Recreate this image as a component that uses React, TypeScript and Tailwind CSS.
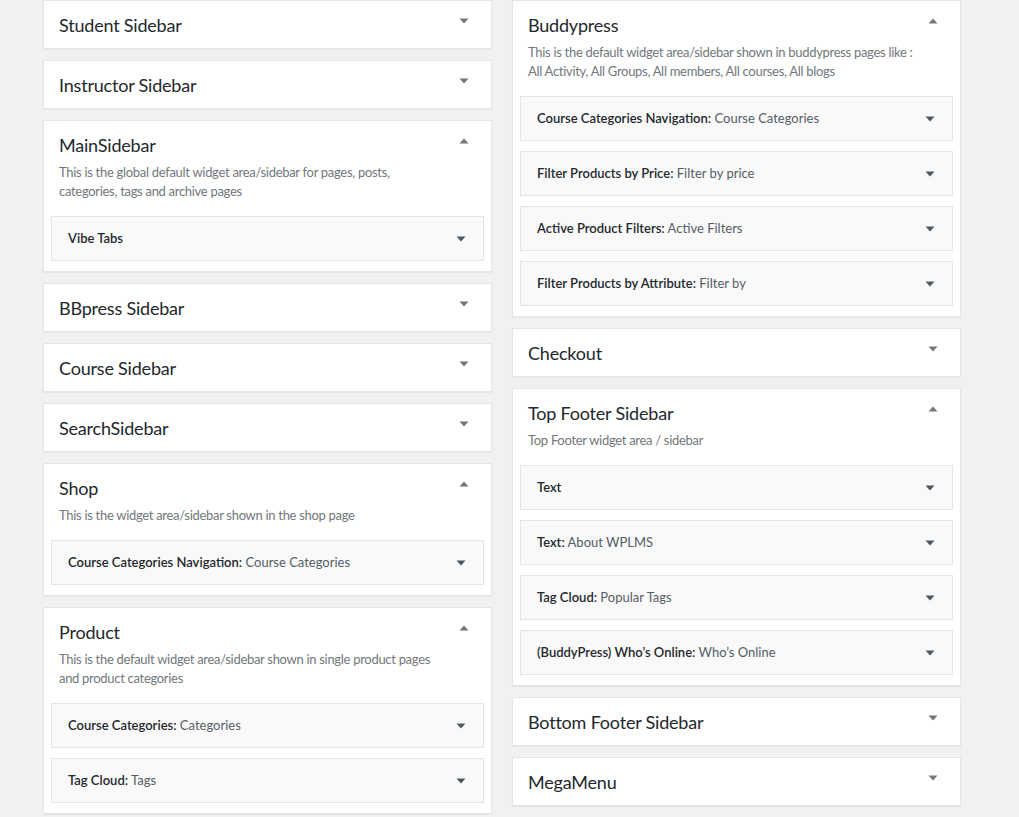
import React from 'react';

type Widget = { name: string; title?: string };
type Area = { name: string; desc?: string[]; widgets?: Widget[]; open?: boolean };

const left: Area[] = [
  { name: 'Student Sidebar' },
  { name: 'Instructor Sidebar' },
  {
    name: 'MainSidebar',
    open: true,
    desc: ['This is the global default widget area/sidebar for pages, posts,', 'categories, tags and archive pages'],
    widgets: [{ name: 'Vibe Tabs' }],
  },
  { name: 'BBpress Sidebar' },
  { name: 'Course Sidebar' },
  { name: 'SearchSidebar' },
  {
    name: 'Shop',
    open: true,
    desc: ['This is the widget area/sidebar shown in the shop page'],
    widgets: [{ name: 'Course Categories Navigation', title: 'Course Categories' }],
  },
  {
    name: 'Product',
    open: true,
    desc: ['This is the default widget area/sidebar shown in single product pages', 'and product categories'],
    widgets: [
      { name: 'Course Categories', title: 'Categories' },
      { name: 'Tag Cloud', title: 'Tags' },
    ],
  },
];

const right: Area[] = [
  {
    name: 'Buddypress',
    open: true,
    desc: ['This is the default widget area/sidebar shown in buddypress pages like :', 'All Activity, All Groups, All members, All courses, All blogs'],
    widgets: [
      { name: 'Course Categories Navigation', title: 'Course Categories' },
      { name: 'Filter Products by Price', title: 'Filter by price' },
      { name: 'Active Product Filters', title: 'Active Filters' },
      { name: 'Filter Products by Attribute', title: 'Filter by' },
    ],
  },
  { name: 'Checkout' },
  {
    name: 'Top Footer Sidebar',
    open: true,
    desc: ['Top Footer widget area / sidebar'],
    widgets: [
      { name: 'Text' },
      { name: 'Text', title: 'About WPLMS' },
      { name: 'Tag Cloud', title: 'Popular Tags' },
      { name: '(BuddyPress) Who\u2019s Online', title: 'Who\u2019s Online' },
    ],
  },
  { name: 'Bottom Footer Sidebar' },
  { name: 'MegaMenu' },
];

const Arrow = ({ up, color }: { up?: boolean; color: string }) => (
  <svg width="10" height="6" viewBox="0 0 10 6" className="shrink-0">
    {up ? <path d="M5 0.5 L9.5 5.5 L0.5 5.5 Z" fill={color} /> : <path d="M0.5 0.5 L9.5 0.5 L5 5.5 Z" fill={color} />}
  </svg>
);

const WidgetRow = ({ w }: { w: Widget }) => (
  <div className="mx-[7px] mb-[10px] last:mb-0 border border-[#e5e5e5] bg-[#f9f9f9] h-[45px] flex items-center justify-between pl-[16px] pr-[17px]">
    <p className="text-[13px] leading-[19px] text-[#23282d]">
      <span className="font-semibold">{w.name}{w.title ? ':' : ''}</span>
      {w.title && <span className="text-[#555d66]"> {w.title}</span>}
    </p>
    <Arrow color="#50575e" />
  </div>
);

const AreaCard = ({ a }: { a: Area }) => (
  <div className="bg-white border border-[#e5e5e5] shadow-[0_1px_1px_rgba(0,0,0,0.04)] mb-[11px]">
    <div className={`flex justify-between pl-[15px] pr-[22px] pt-[12px] ${a.open ? 'pb-[6px]' : 'pb-[11px]'}`}>
      <h2 className="text-[18px] leading-[24px] text-[#23282d] font-normal tracking-[-0.2px]">{a.name}</h2>
      <div className="pt-[5px]">
        <Arrow up={a.open} color="#72777c" />
      </div>
    </div>
    {a.open && (
      <div className="pb-[10px]">
        <div className="px-[15px] mb-[15px] text-[13px] leading-[19px] text-[#72777c] tracking-[-0.3px]">
          {a.desc?.map((d, i) => (
            <p key={i} className="whitespace-nowrap">{d}</p>
          ))}
        </div>
        {a.widgets?.map((w, i) => (
          <WidgetRow key={i} w={w} />
        ))}
      </div>
    )}
  </div>
);

export default function App() {
  return (
    <div
      className="min-h-screen bg-[#f1f1f1] overflow-hidden"
      style={{ fontFamily: 'Lato, "Open Sans", sans-serif' }}
    >
      <div className="flex gap-[20px] pl-[43px] h-[817px]">
        <div className="w-[449px]">
          {left.map((a, i) => (
            <AreaCard key={i} a={a} />
          ))}
        </div>
        <div className="w-[449px]">
          {right.map((a, i) => (
            <AreaCard key={i} a={a} />
          ))}
          <div className="h-[40px] bg-white border border-[#e5e5e5]" />
        </div>
      </div>
    </div>
  );
}
